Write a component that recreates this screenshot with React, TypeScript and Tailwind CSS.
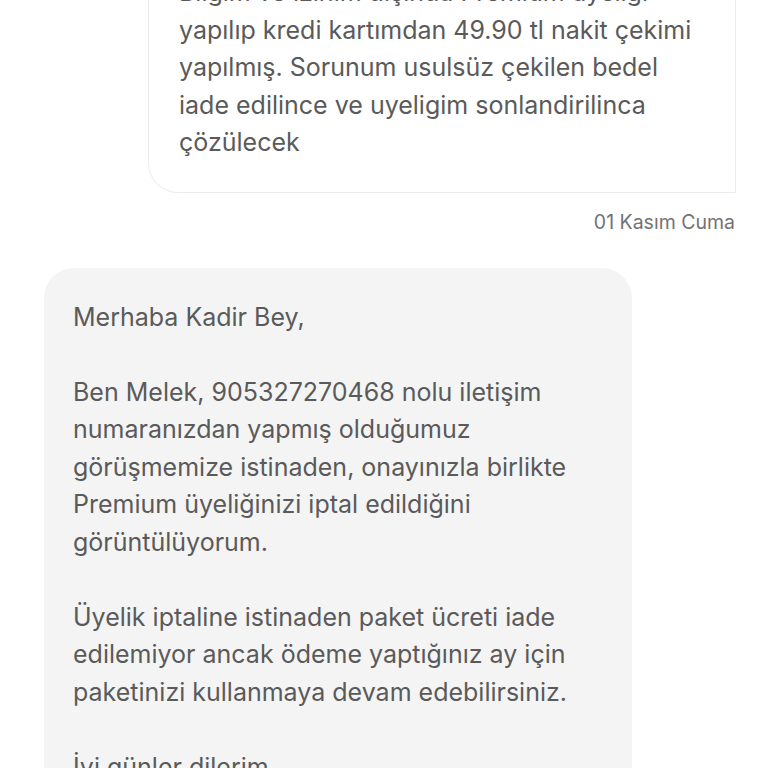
export default function App() {
  const font = { fontFamily: 'Inter, "Noto Sans", sans-serif' };

  return (
    <div className="w-[768px] h-[768px] overflow-hidden bg-white" style={font}>
      <div className="flex flex-col">
        {/* outgoing message */}
        <div className="-mt-[58px] ml-auto mr-[32px] w-[588px] rounded-[30px] rounded-tr-none rounded-br-none border border-[#ebebeb] bg-white pl-[30px] pr-[31px] pt-[31px] pb-[30px] text-[25px] leading-[37.5px] text-[#5a5a5a]">
          <p>
            Bilgim ve izinim dışında Premium üyeliği yapılıp kredi kartımdan 49.90 tl nakit çekimi
            yapılmış. Sorunum usulsüz çekilen bedel iade edilince ve uyeligim sonlandirilinca
            çözülecek
          </p>
        </div>

        <div className="mt-[16px] mr-[33px] text-right text-[19.5px] leading-[26px] text-[#737373]">
          01 Kasım Cuma
        </div>

        {/* incoming message */}
        <div className="mt-[33px] ml-[44px] w-[588px] rounded-t-[30px] bg-[#f4f4f4] pl-[29px] pr-[31px] pt-[31px] pb-[31px] text-[25px] leading-[37.5px] text-[#5a5a5a]">
          <p>Merhaba Kadir Bey,</p>
          <p className="mt-[37.5px]">
            Ben Melek, 905327270468 nolu iletişim numaranızdan yapmış olduğumuz görüşmemize
            istinaden, onayınızla birlikte Premium üyeliğinizi iptal edildiğini görüntülüyorum.
          </p>
          <p className="mt-[37.5px]">
            Üyelik iptaline istinaden paket ücreti iade edilemiyor ancak ödeme yaptığınız ay için
            paketinizi kullanmaya devam edebilirsiniz.
          </p>
          <p className="mt-[37.5px]">İyi günler dilerim.</p>
        </div>
      </div>
    </div>
  );
}
